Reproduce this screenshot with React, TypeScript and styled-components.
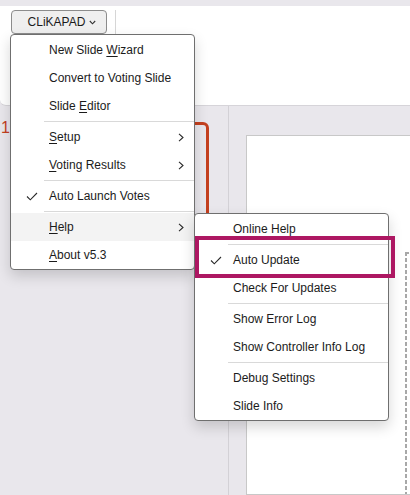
import React, { FC } from 'react'
import styled, { createGlobalStyle } from 'styled-components'

const GlobalStyle = createGlobalStyle`
    html, body {
        margin: 0;
        padding: 0;
    }
    body {
        background: #e9e7ec;
        font-family: "Liberation Sans", Arial, sans-serif;
        overflow: hidden;
    }
`

const Shell = styled.div`
    position: relative;
    width: 410px;
    height: 495px;
    display: flex;
    flex-direction: column;
    overflow: hidden;
    background: #e9e7ec;
`
const TopStrip = styled.div`
    height: 6px;
    flex-shrink: 0;
`
const Ribbon = styled.div`
    height: 100px;
    flex-shrink: 0;
    box-sizing: border-box;
    background: #fff;
    border-bottom: 1px solid #d6d4d9;
    border-radius: 0 0 0 6px;
    padding: 4px 0 0 11px;
    display: flex;
    align-items: flex-start;
`
const AddinButton = styled.div`
    width: 96px;
    height: 24px;
    box-sizing: border-box;
    border: 1px solid #8c8c8c;
    border-radius: 4px;
    background: #efefef;
    display: flex;
    align-items: center;
    justify-content: center;
    gap: 4px;
    padding-left: 6px;
    font-size: 12px;
    color: #1b1b1b;
`
const RibbonDivider = styled.div`
    width: 1px;
    height: 26px;
    margin-left: 8px;
    background: #d6d6d6;
`
const Workspace = styled.div`
    flex: 1;
    display: flex;
    min-height: 0;
    overflow: hidden;
`
const ThumbPanel = styled.div`
    width: 227px;
    flex-shrink: 0;
    border-right: 1px solid #d3d1d6;
    padding: 16px 0 0 1px;
    display: flex;
    align-items: flex-start;
    gap: 8px;
`
const ThumbNumber = styled.div`
    font-size: 16px;
    line-height: 16px;
    margin-top: -2px;
    color: #c4401f;
`
const Thumb = styled.div`
    width: 191px;
    height: 108px;
    flex-shrink: 0;
    box-sizing: border-box;
    border: 3px solid #c4401f;
    border-radius: 6px;
    background: #e9e7ec;
`
const SlideArea = styled.div`
    flex-shrink: 0;
    padding: 29px 0 0 17px;
    display: flex;
`
const Slide = styled.div`
    width: 400px;
    background: #fff;
    border: 1px solid #c8c8c8;
    border-right: none;
    padding: 116px 0 0 158px;
    display: flex;
`
const Placeholder = styled.div`
    flex: 1;
    background-image:
        repeating-linear-gradient(to bottom, #a8a8a8 0 4px, transparent 4px 6px),
        repeating-linear-gradient(to right, #a8a8a8 0 4px, transparent 4px 6px);
    background-size: 2px 100%, 100% 2px;
    background-position: left top, left top;
    background-repeat: no-repeat;
`

const Menu = styled.div<{ $left: number; $top: number; $width: number }>`
    position: absolute;
    left: ${p => p.$left}px;
    top: ${p => p.$top}px;
    width: ${p => p.$width}px;
    box-sizing: border-box;
    background: #fff;
    border: 1px solid #6f6f6f;
    border-radius: 4px;
    padding: 1px 0 0;
    box-shadow: 0 6px 14px rgba(0, 0, 0, 0.16);
    font-size: 12px;
    color: #1b1b1b;
`
const Item = styled.div<{ $active?: boolean }>`
    height: 28px;
    display: flex;
    align-items: center;
    background: ${p => (p.$active ? '#f3f3f3' : 'transparent')};
`
const CheckCell = styled.div`
    width: 38px;
    flex-shrink: 0;
    box-sizing: border-box;
    padding-left: 15px;
    display: flex;
    align-items: center;
`
const Label = styled.div`
    flex: 1;
    white-space: nowrap;
`
const Key = styled.span`
    text-decoration: underline;
    text-underline-offset: 2px;
`
const ArrowCell = styled.div`
    width: 16px;
    display: flex;
    align-items: center;
    justify-content: flex-start;
`
const Separator = styled.div`
    height: 1px;
    margin: 1px 0 1px 33px;
    background: #d9d9d9;
`
const Callout = styled.div`
    position: absolute;
    left: 195px;
    top: 236px;
    width: 200px;
    height: 42px;
    box-sizing: border-box;
    border: 4px solid #ad1762;
`

const Check: FC = () => (
    <svg width="12" height="9" viewBox="0 0 12 9">
        <polyline points="1,4.5 4.3,7.8 11,1" fill="none" stroke="#2a2a2a" strokeWidth="1.1" />
    </svg>
)

const Chevron: FC = () => (
    <svg width="6" height="9" viewBox="0 0 6 9">
        <polyline points="1,0.8 5,4.5 1,8.2" fill="none" stroke="#2a2a2a" strokeWidth="1.1" />
    </svg>
)

const DropCaret: FC = () => (
    <svg width="7" height="5" viewBox="0 0 7 5">
        <polyline points="0.8,1 3.5,3.8 6.2,1" fill="none" stroke="#333" strokeWidth="1.1" />
    </svg>
)

type Entry =
    | { sep: true }
    | { sep?: false; label: React.ReactNode; checked?: boolean; sub?: boolean; active?: boolean }

const mainItems: Entry[] = [
    { label: <>New Slide <Key>W</Key>izard</> },
    { label: 'Convert to Voting Slide' },
    { label: <>Slide <Key>E</Key>ditor</> },
    { sep: true },
    { label: <><Key>S</Key>etup</>, sub: true },
    { label: <><Key>V</Key>oting Results</>, sub: true },
    { sep: true },
    { label: 'Auto Launch Votes', checked: true },
    { sep: true },
    { label: <><Key>H</Key>elp</>, sub: true, active: true },
    { label: <><Key>A</Key>bout v5.3</> },
]

const helpItems: Entry[] = [
    { label: 'Online Help' },
    { sep: true },
    { label: 'Auto Update', checked: true },
    { label: 'Check For Updates' },
    { sep: true },
    { label: 'Show Error Log' },
    { label: 'Show Controller Info Log' },
    { sep: true },
    { label: 'Debug Settings' },
    { label: 'Slide Info' },
]

const MenuList: FC<{ items: Entry[] }> = ({ items }) => (
    <>
        {items.map((item, i) =>
            item.sep ? (
                <Separator key={i} />
            ) : (
                <Item key={i} $active={item.active}>
                    <CheckCell>{item.checked && <Check />}</CheckCell>
                    <Label>{item.label}</Label>
                    <ArrowCell>{item.sub && <Chevron />}</ArrowCell>
                </Item>
            )
        )}
    </>
)

const App: FC = () => {
    return (
        <Shell>
            <GlobalStyle />
            <TopStrip />
            <Ribbon>
                <AddinButton>
                    CLiKAPAD <DropCaret />
                </AddinButton>
                <RibbonDivider />
            </Ribbon>
            <Workspace>
                <ThumbPanel>
                    <ThumbNumber>1</ThumbNumber>
                    <Thumb />
                </ThumbPanel>
                <SlideArea>
                    <Slide>
                        <Placeholder />
                    </Slide>
                </SlideArea>
            </Workspace>

            <Menu $left={10} $top={34} $width={185}>
                <MenuList items={mainItems} />
            </Menu>
            <Menu $left={194} $top={213} $width={195}>
                <MenuList items={helpItems} />
            </Menu>
            <Callout />
        </Shell>
    )
}

export default App
